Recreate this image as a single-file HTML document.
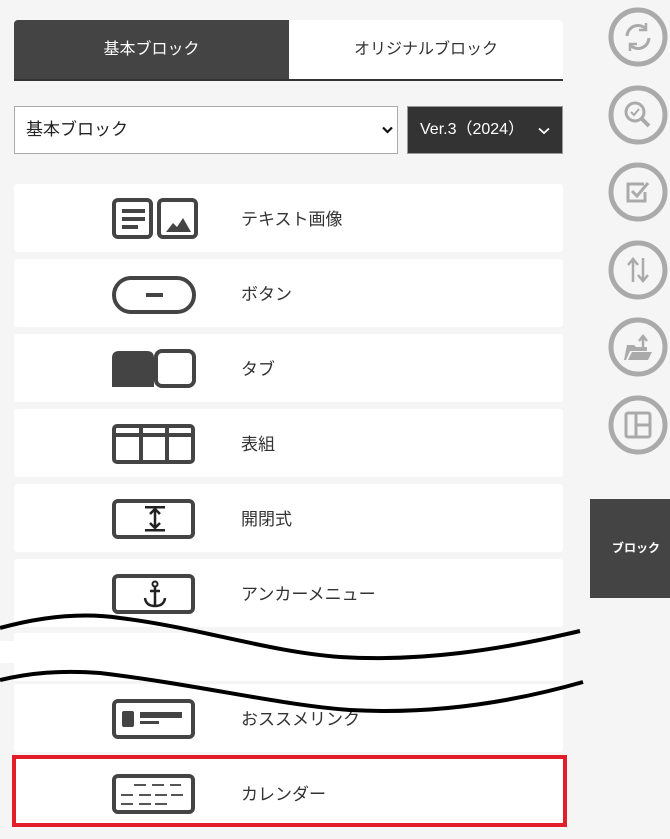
<!DOCTYPE html>
<html><head><meta charset="utf-8"><style>
*{margin:0;padding:0;box-sizing:border-box}
body{width:670px;height:839px;background:#f5f5f5;position:relative;overflow:hidden;font-family:"Liberation Sans","Noto Sans CJK JP",sans-serif;color:#333}
.a{position:absolute}
.card{position:absolute;left:14px;width:549px;height:68px;background:#fff;border-radius:3px}
.card svg{position:absolute;left:98px;top:14px}
.card span{position:absolute;left:227px;top:2px;line-height:68px;font-size:17px;color:#333}
</style></head><body>
<div class="a" style="left:14px;top:20px;width:549px;height:61px;background:#fff;border-radius:4px 4px 0 0;border-bottom:2px solid #333;overflow:hidden">
<div class="a" style="left:0;top:0;width:275px;height:59px;background:#444;color:#fff;font-size:16px;text-align:center;line-height:59px">基本ブロック</div>
<div class="a" style="left:275px;top:0;width:274px;height:59px;color:#333;font-size:16px;text-align:center;line-height:59px">オリジナルブロック</div>
</div>
<div class="a" style="left:14px;top:106px;width:384px;height:48px;background:#fff;border:1px solid #aaa;font-size:17px;line-height:46px;padding-left:11px;color:#222">基本ブロック
<svg class="a" style="left:367px;top:19px" width="11" height="8" viewBox="0 0 11 8"><path d="M1 1.5L5.5 6L10 1.5" stroke="#111" stroke-width="2.2" fill="none"/></svg></div>
<div class="a" style="left:407px;top:106px;width:156px;height:48px;background:#333;border:1px solid #999;color:#fff;font-size:16px;line-height:46px;padding-left:12px">Ver.3（2024）
<svg class="a" style="left:130px;top:20px" width="12" height="8" viewBox="0 0 12 8"><path d="M1 1.5L6 6L11 1.5" stroke="#fff" stroke-width="1.8" fill="none"/></svg></div>

<div class="card" style="top:184px"><svg width="88" height="42" viewBox="0 0 88 42"><rect x="2" y="2" width="37" height="37" rx="4" fill="none" stroke="#444" stroke-width="4"/><rect x="10" y="11" width="23" height="4" fill="#444"/><rect x="10" y="19" width="23" height="4" fill="#444"/><rect x="10" y="27" width="16" height="4" fill="#444"/><rect x="47" y="2" width="37" height="37" rx="4" fill="none" stroke="#444" stroke-width="4"/><path d="M54 34L61 25L65 29L71 20L79 34Z" fill="#444"/></svg><span>テキスト画像</span></div>
<div class="card" style="top:259px"><svg width="88" height="42" viewBox="0 0 88 42"><rect x="2" y="5" width="80" height="34" rx="17" fill="none" stroke="#444" stroke-width="4"/><rect x="34" y="20" width="17" height="4" fill="#444"/></svg><span>ボタン</span></div>
<div class="card" style="top:334px"><svg width="88" height="42" viewBox="0 0 88 42"><path d="M0 39V10Q0 3 7 3H35Q42 3 42 10V39Z" fill="#444"/><rect x="44" y="3" width="38" height="35" rx="6" fill="none" stroke="#444" stroke-width="4"/></svg><span>タブ</span></div>
<div class="card" style="top:409px"><svg width="88" height="42" viewBox="0 0 88 42"><rect x="2" y="3" width="79" height="36" rx="3" fill="none" stroke="#444" stroke-width="4"/><rect x="2" y="10" width="79" height="4" fill="#444"/><rect x="27" y="3" width="4" height="36" fill="#444"/><rect x="53" y="3" width="4" height="36" fill="#444"/></svg><span>表組</span></div>
<div class="card" style="top:484px"><svg width="88" height="42" viewBox="0 0 88 42"><rect x="2" y="3" width="79" height="36" rx="4" fill="none" stroke="#444" stroke-width="4"/><rect x="33" y="8" width="20" height="2.5" fill="#222"/><rect x="33" y="31" width="20" height="2.5" fill="#222"/><path d="M43 12V29M38 16L43 11L48 16M38 25L43 30L48 25" stroke="#222" stroke-width="2.5" fill="none"/></svg><span>開閉式</span></div>
<div class="card" style="top:559px"><svg width="88" height="42" viewBox="0 0 88 42"><rect x="2" y="3" width="79" height="36" rx="4" fill="none" stroke="#444" stroke-width="4"/><circle cx="43" cy="11" r="2.5" fill="none" stroke="#222" stroke-width="2"/><path d="M43 14V33M38 18H48M33 25Q34 33 43 33Q52 33 53 25" stroke="#222" stroke-width="2.5" fill="none"/></svg><span>アンカーメニュー</span></div>

<div class="a" style="left:14px;top:633px;width:549px;height:48px;background:#fff"></div>
<div class="a" style="left:0;top:641px;width:14px;height:22px;background:#fff"></div>
<div class="card" style="top:684px"><svg width="88" height="42" viewBox="0 0 88 42"><rect x="2" y="3" width="79" height="36" rx="4" fill="none" stroke="#444" stroke-width="4"/><rect x="10" y="13" width="12" height="16" rx="2" fill="#444"/><rect x="28" y="14" width="42" height="6" fill="#444"/><rect x="28" y="23" width="19" height="3" fill="#444"/></svg><span>おススメリンク</span></div>
<div class="a" style="left:12px;top:755px;width:555px;height:72px;border:4px solid #e31e2a;background:#fff"></div>
<div class="card" style="top:759px;background:transparent"><svg width="88" height="42" viewBox="0 0 88 42"><rect x="2" y="3" width="79" height="36" rx="4" fill="none" stroke="#444" stroke-width="4"/><g stroke="#555" stroke-width="2"><path d="M22 12h12M40 12h12M58 12h11M9 22h12M27 22h12M43 22h12M59 22h12M9 31h12M27 31h12M43 31h12"/></g></svg><span>カレンダー</span></div>

<svg class="a" style="left:0;top:0" width="670" height="839"><path d="M0 628C40 617 80 612 120 618C200 628 270 652 340 657C420 662 500 650 580 631" stroke="#000" stroke-width="4" fill="none"/><path d="M0 680C30 673 60 670 100 673C200 685 280 705 350 710C440 715 520 700 583 682" stroke="#000" stroke-width="4" fill="none"/></svg>

<svg class="a" style="left:605px;top:0" width="66" height="470" viewBox="0 0 66 470" fill="none" stroke="#aaa">
<g stroke-width="5"><circle cx="33" cy="37" r="27"/><circle cx="33" cy="115" r="27"/><circle cx="33" cy="192" r="27"/><circle cx="33" cy="270" r="27"/><circle cx="33" cy="347" r="27"/><circle cx="33" cy="425" r="27"/></g>
<g stroke-width="3"><path d="M22 36A11 11 0 0 1 41 29M44 38A11 11 0 0 1 25 45"/><path d="M41 23V30H34M25 51V44H32" stroke-width="2.5"/>
<circle cx="30" cy="112" r="9"/><path d="M37 119L44 126" stroke-width="4"/><path d="M26 112L29 115L34 109" stroke-width="2"/>
<path d="M39 184H23V201H40V192"/><path d="M27 191L32 196L43 183"/>
<path d="M28 282V260M23 265L28 259L33 265M38 258V280M33 275L38 281L43 275" stroke-width="2.5"/>
<rect x="21" y="413" width="24" height="24" rx="2"/><path d="M31 413V437M31 425H45"/></g>
<path d="M19 360L22 345H29L31 347H42V351H25L21 360ZM23 360L27 352H47L43 360Z" fill="#aaa" stroke="none"/><path d="M38 348V337M34 341L38 336L42 341" stroke-width="2.5"/>
</svg>
<div class="a" style="left:590px;top:499px;width:80px;height:99px;background:#444;color:#fff;font-size:12px;font-weight:bold;line-height:99px;padding-left:22px">ブロック</div>
</body></html>
